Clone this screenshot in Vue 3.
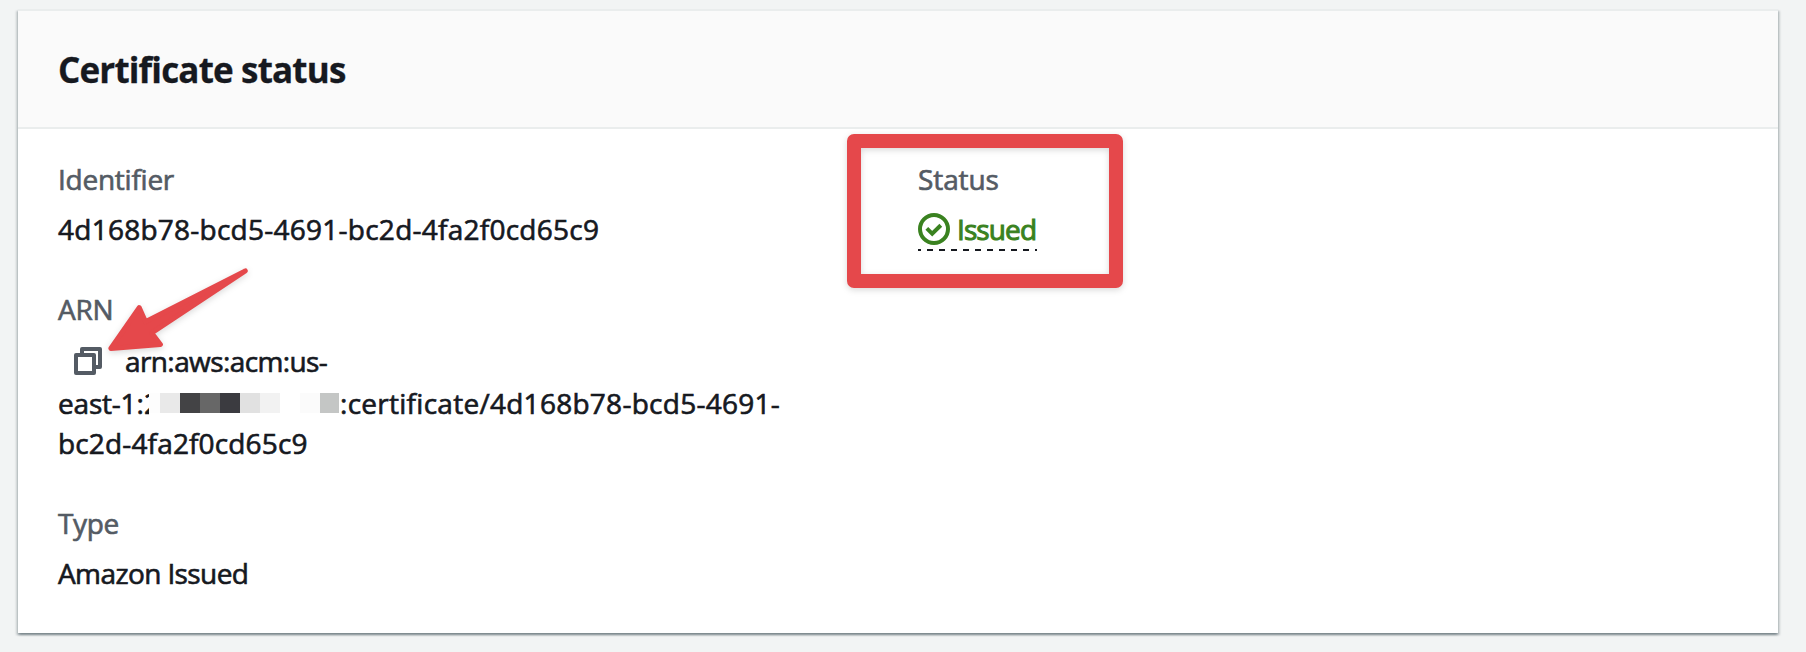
<script setup>
const mosaic = ['#fdfdfd', '#e9e9e9', '#434345', '#676767', '#3b3b40', '#e1e1e1', '#f2f2f2', '#ffffff', '#fbfbfb', '#c4c6c5']
</script>

<template>
  <main class="page">
    <section class="card">
      <header class="card-header"><h2 class="title">Certificate status</h2></header>
      <div class="card-body">
        <div class="column">
          <div class="field">
            <div class="label t-identifier">Identifier</div>
            <div class="value t-uuid">4d168b78-bcd5-4691-bc2d-4fa2f0cd65c9</div>
          </div>
          <div class="field arn">
            <div class="label t-arn">ARN</div>
            <div class="arn-line first">
              <svg class="copy" width="28" height="28" viewBox="0 0 28 28" fill="none" stroke="#545b64" stroke-width="4" stroke-linejoin="round">
                <path d="M8 7V2h18v18h-5" />
                <path d="M2 8h18v18H2z" />
              </svg>
              <span class="t-prefix">arn:aws:acm:us-</span>
            </div>
            <div class="arn-line second">
              <span class="region">east-1:</span><span class="digit">2</span>
              <span class="mosaic"><i v-for="(c, i) in mosaic" :key="i" :style="{ background: c }"></i></span>
              <span class="t-cert">:certificate/4d168b78-bcd5-4691-</span>
            </div>
            <div class="arn-line third">bc2d-4fa2f0cd65c9</div>
          </div>
          <div class="field">
            <div class="label t-type">Type</div>
            <div class="value t-amazon">Amazon Issued</div>
          </div>
        </div>
        <div class="column">
          <div class="field">
            <div class="label t-status">Status</div>
            <div class="status">
              <svg class="check" width="32" height="32" viewBox="0 0 32 32" fill="none" stroke="#3a8220" stroke-width="4">
                <circle cx="16" cy="16" r="14" />
                <path d="M8.8 15.4l5.4 5.2 8.6-8.4" />
              </svg>
              <span class="t-issued">Issued</span>
            </div>
          </div>
        </div>
      </div>
    </section>
    <div class="highlight"></div>
    <svg class="arrow" width="160" height="100" viewBox="100 260 160 100">
      <path d="M110.8 348.4L139.2 307.6L145.5 321.8L245.3 270.9L151.7 333L160.4 344.4Z" fill="#e5484b" stroke="#e5484b" stroke-width="5" stroke-linejoin="round" />
    </svg>
  </main>
</template>

<style>
body { background: #f2f4f4; }
</style>

<style scoped>
.page {
  position: relative;
  box-sizing: border-box;
  height: 652px;
  padding: 9px 28px 0 18px;
  overflow: hidden;
  background: #f2f4f4;
  color: #16191f;
  font: 400 28px/40px "Open Sans", "Noto Sans", sans-serif;
  -webkit-text-stroke: 0.65px currentColor;
}
.card {
  box-sizing: border-box;
  height: 624px;
  border-top: 2px solid #eaeded;
  background: #fff;
  box-shadow: 0 2px 2px 0 rgba(0, 28, 36, 0.3), 2px 2px 2px 0 rgba(0, 28, 36, 0.15), -2px 2px 2px 0 rgba(0, 28, 36, 0.15);
}
.card-header {
  box-sizing: border-box;
  height: 118px;
  padding: 36px 40px 0;
  border-bottom: 2px solid #eaeded;
  background: #fafafa;
}
.title {
  margin: 0;
  font-size: 35px;
  font-weight: 700;
  line-height: 46px;
  letter-spacing: -0.83px;
  -webkit-text-stroke: 0.3px currentColor;
}
.card-body {
  display: grid;
  grid-template-columns: 860px 1fr;
  padding: 30px 0 0 40px;
}
.column { display: flex; flex-direction: column; gap: 40px; }
.field { white-space: nowrap; }
.label { color: #545b64; }
.value { margin-top: 10px; }
.arn { height: 174px; }
.arn-line { display: flex; align-items: center; height: 40px; }
.first { margin: 12px 0 2px; }
.copy { margin: 0 23px 0 16px; }
.third { letter-spacing: 0.15px; }
.region { width: 86px; letter-spacing: -0.2px; }
.digit { width: 5px; }
.mosaic { position: relative; display: flex; width: 191px; height: 20px; }
.mosaic i { flex: 0 0 20px; }
.mosaic i:first-child { flex-basis: 11px; box-shadow: 0 3px 0 #fff, 0 -3px 0 #fff; }
.mosaic i:last-child { flex-basis: 19px; }
.status {
  display: flex;
  align-items: center;
  width: 119px;
  height: 42px;
  margin-top: 10px;
  color: #3a8220;
  background: repeating-linear-gradient(90deg, #16191f 0 6px, transparent 6px 12px) -3px 100% / 132px 2px no-repeat;
}
.check { margin: -2px 7px 0 0; }
.t-identifier { letter-spacing: -0.25px; }
.t-uuid { letter-spacing: 0.25px; }
.t-arn { letter-spacing: -0.3px; }
.t-prefix { letter-spacing: -0.6px; }
.t-cert { letter-spacing: 0.27px; }
.t-type { letter-spacing: -0.4px; }
.t-amazon { letter-spacing: -0.6px; }
.t-status { letter-spacing: -0.1px; }
.t-issued { margin-top: -2px; letter-spacing: -0.9px; -webkit-text-stroke: 1px currentColor; }
.highlight {
  position: absolute;
  left: 847px;
  top: 134px;
  box-sizing: border-box;
  width: 276px;
  height: 154px;
  border: 14px solid #e5484b;
  border-radius: 7px;
  filter: drop-shadow(0 2px 3px rgba(0, 0, 0, 0.15));
}
.arrow {
  position: absolute;
  left: 100px;
  top: 260px;
  filter: drop-shadow(0 2px 3px rgba(0, 0, 0, 0.15));
}
</style>
